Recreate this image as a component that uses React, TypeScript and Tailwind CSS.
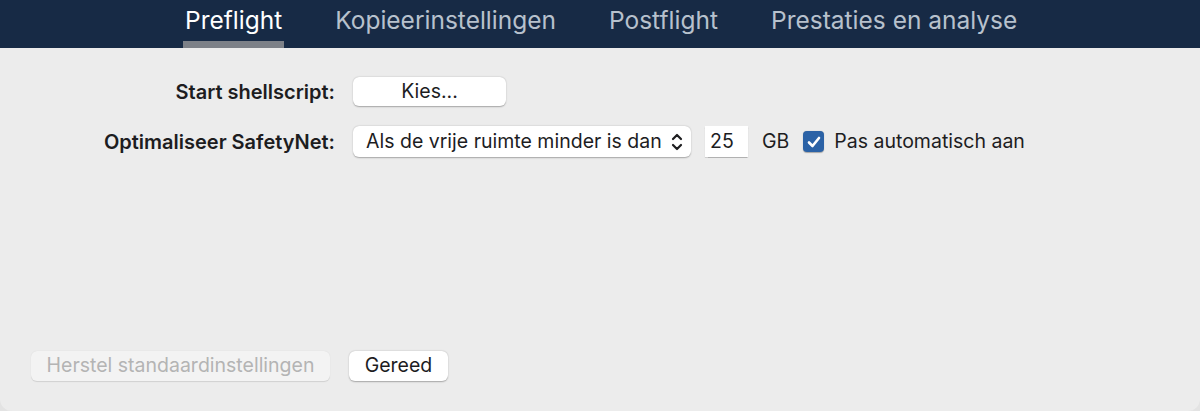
import React from "react";

const tabs = ["Preflight", "Kopieerinstellingen", "Postflight", "Prestaties en analyse"];

export default function App() {
  return (
    <div className="h-[411px] w-[1200px] bg-[#e3e3e3] font-['Inter',sans-serif]">
      <div className="flex h-full flex-col overflow-hidden rounded-b-[12px] bg-[#ececec]">
        <div className="flex h-[48px] items-end bg-[#172a45] pl-[183px]">
          {tabs.map((t, i) => (
            <div key={t} className={`flex h-full flex-col ${i === 0 ? "" : "ml-[49px]"}`}>
              <div className={`flex-1 px-[2px] pt-[4px] text-[24.5px] leading-[32px] ${i === 0 ? "text-white" : "text-[#b7c1cd]"}`}>
                {t}
              </div>
              <div className={`h-[7px] ${i === 0 ? "bg-[#7d8188]" : ""}`} />
            </div>
          ))}
        </div>

        <div className="flex-1 pt-[29px] text-[19.5px] text-[#1d1d1f]">
          <div className="flex h-[29px] items-center">
            <div className="w-[335px] text-right text-[20px] font-semibold">Start shellscript:</div>
            <button className="ml-[18px] h-[29px] w-[153px] rounded-[6px] bg-white pb-[2px] text-[19.5px] shadow-[0_0.5px_1.5px_rgba(0,0,0,0.3)]">
              Kies...
            </button>
          </div>
          <div className="mt-[20px] flex h-[31px] items-center">
            <div className="w-[335px] text-right text-[20px] font-semibold">Optimaliseer SafetyNet:</div>
            <div className="ml-[18px] flex h-[31px] w-[338px] items-center justify-between rounded-[6px] bg-white pl-[13px] pr-[8px] shadow-[0_0.5px_1.5px_rgba(0,0,0,0.3)]">
              <span>Als de vrije ruimte minder is dan</span>
              <svg width="12" height="20" viewBox="0 0 12 20" fill="none" stroke="#1d1d1f" strokeWidth="2.2" strokeLinecap="round" strokeLinejoin="round">
                <path d="M2 7 6 3 10 7" />
                <path d="M2 13 6 17 10 13" />
              </svg>
            </div>
            <div className="ml-[14px] flex h-[31px] w-[43px] items-center bg-white pl-[5px] shadow-[0_0.5px_1px_rgba(0,0,0,0.25)]">25</div>
            <span className="ml-[14px]">GB</span>
            <div className="ml-[14px] flex h-[21px] w-[21px] items-center justify-center rounded-[4px] bg-[#2b62a6] shadow-[0_0.5px_1px_rgba(0,0,0,0.3)]">
              <svg width="16" height="16" viewBox="0 0 16 16" fill="none" stroke="white" strokeWidth="2.6" strokeLinecap="round" strokeLinejoin="round">
                <path d="M3 8.5 6.5 12 13 4" />
              </svg>
            </div>
            <span className="ml-[10px]">Pas automatisch aan</span>
          </div>
        </div>

        <div className="flex items-center pb-[30px] pl-[31px] text-[19.5px]">
          <button className="h-[30px] w-[299px] rounded-[6px] bg-[#f3f3f3] text-[#b4b4b4] shadow-[0_0.5px_1px_rgba(0,0,0,0.12)]">
            Herstel standaardinstellingen
          </button>
          <button className="ml-[19px] h-[30px] w-[99px] rounded-[6px] bg-white text-[#1d1d1f] shadow-[0_0.5px_1.5px_rgba(0,0,0,0.3)]">
            Gereed
          </button>
        </div>
      </div>
    </div>
  );
}
